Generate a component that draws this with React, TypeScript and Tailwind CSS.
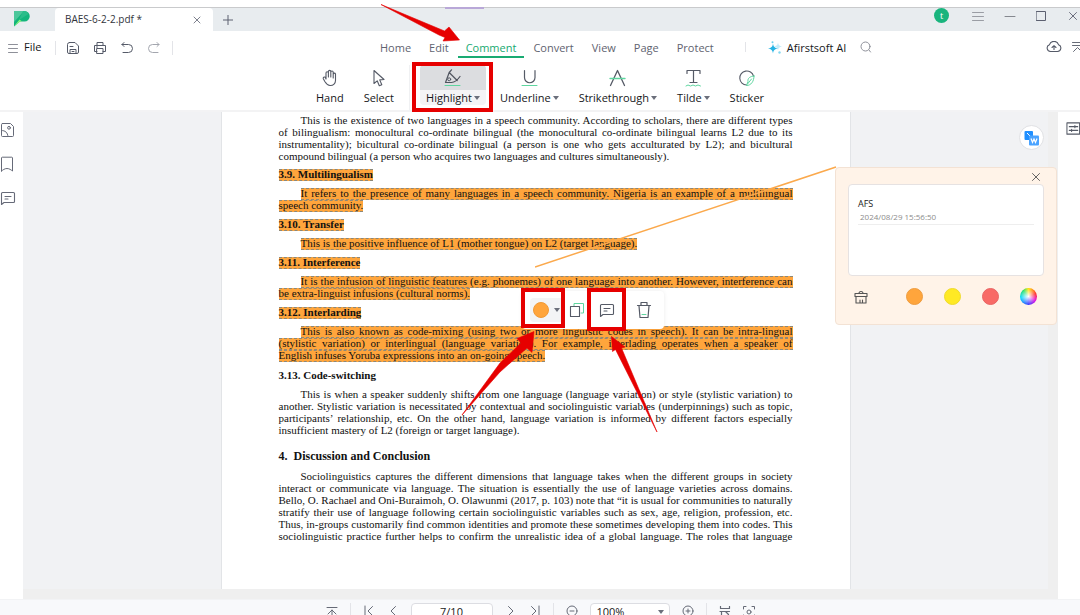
import React from "react";

type IconProps = { children: React.ReactNode; box?: string; className?: string };

function Icon({ children, box = "0 0 16 16", className = "size-4" }: IconProps) {
  return (
    <svg
      viewBox={box}
      className={`block shrink-0 ${className}`}
      fill="none"
      stroke="currentColor"
      strokeWidth="1"
      strokeLinecap="round"
      strokeLinejoin="round"
      aria-hidden="true"
    >
      {children}
    </svg>
  );
}

function Caret() {
  return (
    <svg viewBox="0 0 6 4" className="block h-1 w-1.5 shrink-0" aria-hidden="true">
      <path d="M0 0h6L3 4z" fill="#6b6f7b" />
    </svg>
  );
}

function Divider({ className = "h-3.5" }: { className?: string }) {
  return <span className={`w-px shrink-0 bg-[#e3e4e8] ${className}`} />;
}

function TitleBar() {
  return (
    <header className="mt-[7px] flex h-6 shrink-0 items-stretch border-t border-[#c9cacc] bg-[#e8ecef] text-[#5c6070]">
      <div className="flex w-[55px] shrink-0 pt-[3px] pl-3.5">
        <svg viewBox="0 0 16 16" className="size-4" aria-hidden="true">
          <path d="M0 0h10.500a5 5 0 0 1 0 10.500H6L0 15.500z" fill="#14b57c" />
          <path d="M0 0h10L0 11z" fill="#4cc79b" />
          <path d="M0 15.500 5.500 8.500 8 10.500H6z" fill="#8bf77c" />
          <path d="M9 0h2a5 5 0 0 1 3.500 3L5 9z" fill="#2bbd8a" />
        </svg>
      </div>
      <div className="flex w-[158px] shrink-0 items-center justify-between rounded-t bg-white pr-3 pl-2.5">
        <span className="text-[10px] text-[#33353c]">BAES-6-2-2.pdf *</span>
        <button aria-label="Close tab">
          <Icon box="0 0 8 8" className="size-2"><path d="M1 1l6 6M7 1 1 7" strokeWidth="0.8" /></Icon>
        </button>
      </div>
      <button aria-label="New tab" className="pl-2.5">
        <Icon box="0 0 10 10" className="size-2.5"><path d="M5 0v10M0 5h10" /></Icon>
      </button>
      <div className="ml-auto flex items-start">
        <span className="mr-[23px] flex size-[15px] items-center justify-center rounded-full bg-[#19b47d] text-[9px] leading-none text-white">t</span>
        <button aria-label="Menu" className="mr-5 text-[#9a9da4]"><Icon className="h-4 w-3" box="0 0 12 16"><path d="M.5 4.500h11M.5 8.500h11M.5 12.500h11" /></Icon></button>
        <button aria-label="Minimize" className="mr-5 text-[#85888f]"><Icon className="h-4 w-3" box="0 0 12 16"><path d="M1 8.500h10" /></Icon></button>
        <button aria-label="Maximize" className="mr-[22px]"><Icon className="h-4 w-2.5" box="0 0 10 16"><path d="M.5 3.500h9v9h-9z" /></Icon></button>
        <button aria-label="Close" className="pr-0.5"><Icon className="h-4 w-2.5" box="0 0 10 16"><path d="m1.500 4.500 7 7m0-7-7 7" strokeWidth="0.9" /></Icon></button>
      </div>
    </header>
  );
}

const tabs = ["Home", "Edit", "Comment", "Convert", "View", "Page", "Protect"];

function MenuRow() {
  return (
    <div className="flex h-[31px] shrink-0 items-center text-[#555a68]">
      <div className="flex w-[371px] shrink-0 items-center pt-0.5 pl-2">
        <button className="flex items-center gap-1.5 text-[11px] text-[#16171a]">
          <Icon box="0 0 10 12" className="h-3 w-2.5 text-[#8e9099]"><path d="M.5 2.500h9M.5 6.500h9M.5 10.500h9" /></Icon>
          File
        </button>
        <span className="ml-3.5 flex items-center gap-[11px]">
          <Divider />
          <button aria-label="Save"><Icon box="0 0 12 12" className="size-3"><path d="M2.500.5h5.500l3.500 3.500v6a1.500 1.500 0 0 1-1.500 1.500H2A1.500 1.500 0 0 1 .5 10V2.500a2 2 0 0 1 2-2zM3 11.500V7.500h6v4M3 4.500h3M5 9.500h2" /></Icon></button>
        </span>
        <button aria-label="Print" className="ml-[15px]"><Icon box="0 0 12 12" className="size-3"><path d="M3 3.500v-3h6v3M3 9.500H.5v-6h11v6H9M3 6.500h6v5H3zM2.500 5h1" /></Icon></button>
        <button aria-label="Undo" className="ml-[15px]"><Icon box="0 0 12 12" className="size-3"><path d="M3 .5 1 2.500l2 2M1 2.500h6.500a4 4 0 0 1 0 8H2" /></Icon></button>
        <button aria-label="Redo" className="ml-[15px] text-[#a3a6ae]"><Icon box="0 0 12 12" className="size-3"><path d="m9 .5 2 2-2 2M11 2.500H4.500a4 4 0 0 0 0 8H10" /></Icon></button>
        <span className="ml-3"><Divider className="block h-3.5" /></span>
      </div>
      <nav className="flex h-full text-[11px]">
        {tabs.map((t) => (
          <a
            key={t}
            href={`#${t.toLowerCase()}`}
            className={
              t === "Comment"
                ? "mb-1 flex items-center border-b-2 border-[#19ab72] px-2 pt-[9px] text-[#17a971]"
                : "flex items-center px-[9px] pt-[3px] text-[#5f6370]"
            }
          >
            {t}
          </a>
        ))}
      </nav>
      <span className="mr-[22px] ml-[22px]"><Divider className="block h-2.5" /></span>
      <a href="#ai" className="flex shrink-0 items-center gap-[5px] pt-[3px] text-[11px] text-[#16171a]">
        <svg viewBox="0 0 14 14" className="size-3.5" aria-hidden="true">
          <path d="M10 1.500c.4 2.600 1.400 3.600 4 4-2.600.4-3.600 1.400-4 4-.4-2.600-1.400-3.600-4-4 2.600-.4 3.600-1.400 4-4z" fill="#c5ecfa" />
          <path d="M5 2.500c.6 3.400 1.600 4.400 5 5-3.400.6-4.400 1.600-5 5-.6-3.400-1.600-4.400-5-5 3.400-.6 4.400-1.600 5-5z" fill="#25b3e4" />
          <circle cx="4.500" cy="1.200" r="1" fill="#6cd0ef" />
          <circle cx="11.500" cy="11.500" r="1.200" fill="#84d8f1" />
        </svg>
        Afirstsoft AI
      </a>
      <button aria-label="Search" className="ml-3.5 text-[#8f929b]"><Icon box="0 0 12 12" className="size-3"><circle cx="5.500" cy="5.500" r="4.500" /><path d="m9 9 1.500 2" /></Icon></button>
      <div className="ml-auto flex items-center gap-2.5">
        <button aria-label="Cloud upload"><Icon box="0 0 16 12" className="h-3 w-4"><path d="M4.500 10.500a3.500 3.500 0 0 1-1-6.800 4.700 4.700 0 0 1 9 0 3.500 3.500 0 0 1-1 6.800zM8 8.500V5M6 6.500 8 4.700l2 1.800" strokeWidth="1.100" /></Icon></button>
        <button aria-label="Collapse ribbon" className="w-2 overflow-hidden"><Icon box="0 0 11 12" className="h-3 w-[11px]"><path d="M.5 1.500h10M.5 4.500h10M1.500 10.500l4-4 4 4" strokeWidth="0.900" /></Icon></button>
      </div>
    </div>
  );
}

const green = "#5fd6a0";
const tools = [
  { name: "Hand", caret: false, icon: <path d="M5 10V4a1.200 1.200 0 0 1 2.400 0v4V2.600a1.200 1.200 0 0 1 2.400 0V8 3.200a1.200 1.200 0 0 1 2.400 0V9 5a1.200 1.200 0 0 1 2.300 0v6.500a5 5 0 0 1-5 5H9c-2.400 0-3.600-1.600-5-3.800L2.300 9.800a1.300 1.300 0 0 1 2-1.500z" strokeWidth="1.100" /> },
  { name: "Select", caret: false, icon: <path d="M4 1.500v13l3.200-2.700 2.100 5 2.500-1-2.100-4.900 4.300-.4z" strokeWidth="1.100" /> },
  { name: "Highlight", caret: true, icon: <><path d="M7.500.8 5.200 3.500 1.500 13.500h6c3.500-.3 6-2.500 8.500-6M5.200 3.500l8 8" strokeWidth="1.200" /><circle cx="5.200" cy="10.300" r="1.500" /><path d="M1 16.500h15" stroke={green} /></> },
  { name: "Underline", caret: true, icon: <><path d="M3.500 1.500v7a5 5 0 0 0 10.500 0v-7" strokeWidth="1.200" /><path d="M1 16.500h15" stroke={green} /></> },
  { name: "Strikethrough", caret: true, icon: <><path d="m1.500 16.500 7-15 7 15" strokeWidth="1.300" /><path d="M1 9.500h15" stroke={green} strokeWidth="1.400" /></> },
  { name: "Tilde", caret: true, icon: <><path d="M2 4.500v-3h13v3M8.500 1.500v12M5 13.500h7" strokeWidth="1.200" /><path d="M1 17l2-1 2.500 1 2.500-1 2.500 1 2.500-1 2.500 1" stroke={green} /></> },
  { name: "Sticker", caret: false, icon: <><path d="M15.500 7a7 7 0 1 0-7 9" strokeWidth="1.100" /><path d="M16 7c-4 .5-6.500 2-6 5.500L8.500 16.500c4.500 0 7.500-4 7.500-9.500zM9.500 15l4-5" stroke={green} /></> },
];

function ToolRow() {
  return (
    <div className="flex h-12 shrink-0 items-stretch justify-center pt-[3px] text-[11px] text-[#16171a]">
      {tools.map((t) => {
        const on = t.name === "Highlight";
        return (
          <React.Fragment key={t.name}>
            {on && <span className="ml-[5px] w-px bg-[#f0f1f3]" />}
            <button className={on ? "mr-1 ml-2.5 flex w-[66px] flex-col items-center" : "flex flex-col items-center px-2.5"}>
              <span className={on ? "flex h-[25px] w-full items-center justify-center rounded-t bg-[#dcdde0] text-[#50545f]" : "flex h-[25px] items-center text-[#555a66]"}>
                <Icon box="0 0 17 18" className="h-[18px] w-[17px]">{t.icon}</Icon>
              </span>
              <span className={on ? "flex w-full items-center justify-center gap-0.5 rounded-b bg-[#f4f4f6] leading-[15px]" : "flex items-center gap-0.5 leading-[15px]"}>
                {t.name}
                {t.caret && <Caret />}
              </span>
            </button>
          </React.Fragment>
        );
      })}
    </div>
  );
}

function Line({ text, indent, end, mark }: { text: string; indent: boolean; end: boolean; mark: boolean }) {
  return (
    <span className={`flex h-3 whitespace-nowrap ${indent ? "pl-[22px]" : ""}`}>
      <span
        className={`block h-3 ${end ? "" : "grow [text-align-last:justify]"} ${
          mark ? "border-y border-dashed border-[#8d8878] bg-[#ffa53c] leading-[9px]" : "leading-[12px]"
        }`}
      >
        {text}
      </span>
    </span>
  );
}

function Para({ lines, mark = false, continues = false }: { lines: string[]; mark?: boolean; continues?: boolean }) {
  return (
    <p>
      {lines.map((l, i) => (
        <Line key={l} text={l} indent={i === 0} end={!continues && i === lines.length - 1} mark={mark} />
      ))}
    </p>
  );
}

function Heading({ text, mark = true }: { text: string; mark?: boolean }) {
  return (
    <h2 className="font-bold">
      <Line text={text} indent={false} end mark={mark} />
    </h2>
  );
}

function Page() {
  return (
    <article className="mx-auto h-full w-[630px] max-w-full overflow-hidden border-x border-[#e2e4e7] bg-white px-[57px] pt-0.5 font-['Liberation_Serif',serif] text-[11px] text-[#111]">
      <div className="mb-[7px]">
        <Para
          lines={[
            "This is the existence of two languages in a speech community. According to scholars, there are different types",
            "of bilingualism: monocultural co-ordinate bilingual (the monocultural co-ordinate bilingual learns L2 due to its",
            "instrumentality); bicultural co-ordinate bilingual (a person is one who gets acculturated by L2); and bicultural",
            "compound bilingual (a person who acquires two languages and cultures simultaneously).",
          ]}
        />
      </div>
      <div className="flex flex-col gap-[7px]">
        <Heading text="3.9. Multilingualism" />
        <Para mark lines={["It refers to the presence of many languages in a speech community. Nigeria is an example of a multilingual", "speech community."]} />
        <Heading text="3.10. Transfer" />
        <Para mark lines={["This is the positive influence of L1 (mother tongue) on L2 (target language)."]} />
        <Heading text="3.11. Interference" />
        <Para mark lines={["It is the infusion of linguistic features (e.g. phonemes) of one language into another. However, interference can", "be extra-linguist infusions (cultural norms)."]} />
        <Heading text="3.12. Interlarding" />
        <Para
          mark
          lines={[
            "This is also known as code-mixing (using two or more linguistic codes in speech). It can be intra-lingual",
            "(stylistic variation) or interlingual (language variation). For example, interlading operates when a speaker of",
            "English infuses Yoruba expressions into an on-going speech.",
          ]}
        />
        <Heading text="3.13. Code-switching" mark={false} />
        <Para
          lines={[
            "This is when a speaker suddenly shifts from one language (language variation) or style (stylistic variation) to",
            "another. Stylistic variation is necessitated by contextual and sociolinguistic variables (underpinnings) such as topic,",
            "participants’ relationship, etc. On the other hand, language variation is informed by different factors especially",
            "insufficient mastery of L2 (foreign or target language).",
          ]}
        />
      </div>
      <div className="mt-3.5 flex flex-col gap-2">
        <h1 className="text-[12px] leading-[12px] font-bold whitespace-pre">4.  Discussion and Conclusion</h1>
        <Para
          continues
          lines={[
            "Sociolinguistics captures the different dimensions that language takes when the different groups in society",
            "interact or communicate via language. The situation is essentially the use of language varieties across domains.",
            "Bello, O. Rachael and Oni-Buraimoh, O. Olawunmi (2017, p. 103) note that “it is usual for communities to naturally",
            "stratify their use of language following certain sociolinguistic variables such as sex, age, religion, profession, etc.",
            "Thus, in-groups customarily find common identities and promote these sometimes developing them into codes. This",
            "sociolinguistic practice further helps to confirm the unrealistic idea of a global language. The roles that language",
          ]}
        />
      </div>
    </article>
  );
}

function NoteIcon({ className = "size-4" }: { className?: string }) {
  return (
    <Icon className={className}>
      <path d="M2.500 2.500h11a1 1 0 0 1 1 1v8a1 1 0 0 1-1 1H4l-2.500 2v-11a1 1 0 0 1 1-1zM5 6.500h6M5 9h3" strokeWidth="1.100" />
    </Icon>
  );
}

function Sidebar() {
  return (
    <aside className="flex w-[23px] shrink-0 flex-col gap-[18px] bg-white pt-2.5 text-[#666a78]">
      <button aria-label="Thumbnails"><Icon><path d="M2.500 1.500h8l3 3v9a1 1 0 0 1-1 1h-10a1 1 0 0 1-1-1v-11a1 1 0 0 1 1-1zM1.500 8.500c4 0 6 2 6.500 6" /><circle cx="9" cy="5.800" r="1.400" /></Icon></button>
      <button aria-label="Bookmarks"><Icon><path d="M1.500 15V2a.8.8 0 0 1 .8-.8h9.400a.8.8 0 0 1 .8.8v13c-1.500-1-3-2.500-5.500-2.500S3 14 1.500 15z" /></Icon></button>
      <button aria-label="Comments"><NoteIcon /></button>
    </aside>
  );
}

function FloatingBar() {
  return (
    <div className="absolute top-[291px] left-[522px] flex h-[38px] w-[142px] items-center rounded bg-white pl-2 text-[#555a66] shadow-[0_0_4px_rgba(0,0,0,0.08)]">
      <button aria-label="Colour" className="flex h-6 w-[34px] items-center justify-between rounded bg-[#f3f4f6] pr-1 pl-[3px]">
        <span className="size-4 rounded-full border border-[#f19a36] bg-[#ffa53c]" />
        <Caret />
      </button>
      <button aria-label="Copy" className="ml-[5px]">
        <Icon><path d="M5 4V1.500h9.500V11H12" stroke={green} /><path d="M1.500 4.500h9v10h-9z" strokeWidth="1.100" /></Icon>
      </button>
      <button aria-label="Add note" className="ml-3.5"><NoteIcon /></button>
      <button aria-label="Delete" className="ml-[21px]">
        <Icon box="0 0 16 18" className="h-[18px] w-4"><path d="M1.500 4.500h13M5 4.500V1.500h6v3M3 5l1 11.500h8L13 5" strokeWidth="1.200" /><path d="M6 13.500h4" stroke={green} /></Icon>
      </button>
    </div>
  );
}

function NotePopup() {
  return (
    <section aria-label="Note" className="absolute top-[167px] left-[835px] flex h-[158px] w-[222px] flex-col rounded-sm border border-[#f3e2d4] bg-[#fff3e8] px-3 text-[#555]">
      <button aria-label="Close note" className="mt-1 mr-[3px] self-end"><Icon box="0 0 10 10" className="size-2.5"><path d="m1.500 1.500 7 7m0-7-7 7" strokeWidth="0.900" /></Icon></button>
      <div className="mt-0.5 flex h-[92px] flex-col rounded border border-[#e6e2e2] bg-white px-[9px] pt-3">
        <div className="text-[9px] leading-[13px] text-[#222]">AFS</div>
        <div className="border-b border-[#eee] pb-[1px] pl-0.5 text-[8px] leading-[13px] text-[#8c8c8c]">2024/08/29 15:56:50</div>
        <textarea aria-label="Note text" className="min-h-0 grow resize-none outline-none" />
      </div>
      <div className="mt-3 flex items-center pl-1.5">
        <button aria-label="Clear" className="mr-[38px]"><Icon box="0 0 14 14" className="size-3.5"><path d="M5 3.500a2 2 0 0 1 4 0M1 6.500v-3h12v3zM2 6.500v6.500h10V6.500M6 13v-3M8.500 13v-3" strokeWidth="1.100" /></Icon></button>
        <div className="flex gap-[21px]">
          <button aria-label="Orange" className="size-[17px] rounded-full border border-[#ee9c3f] bg-[#ffa53c]" />
          <button aria-label="Yellow" className="size-[17px] rounded-full border border-[#eedb2d] bg-[#ffe924]" />
          <button aria-label="Red" className="size-[17px] rounded-full border border-[#e96565] bg-[#f86a66]" />
          <button aria-label="More colours" className="size-[17px] rounded-full bg-[radial-gradient(circle,white,transparent_70%),conic-gradient(#ffe000,#ff2020_70deg,#e000e0_120deg,#3030ff_180deg,#00d8ff_260deg,#20e060_320deg,#ffe000)]" />
        </div>
      </div>
    </section>
  );
}

function Arrows() {
  return (
    <svg viewBox="0 0 1080 615" className="pointer-events-none absolute top-0 left-0 h-[615px] w-[1080px]" aria-hidden="true">
      <g fill="#e60000" stroke="#e60000" strokeWidth="0.600" strokeLinejoin="round">
        <path d="M381 4.500 444.500 31 449 27 459.500 40 443 41 445 37.500 439 35z" />
        <path d="M462 415 500 363 521 343 517 338.500 534 331.500 532 352.500 527 348 500 372z" />
        <path d="M657 432 615.500 349.500 612.500 351.500 611.500 336.500 625 347 621.500 348z" />
      </g>
    </svg>
  );
}

function Footer() {
  return (
    <footer className="flex h-4 shrink-0 items-start justify-center gap-3 overflow-hidden border-t border-[#f2f3f5] bg-[#f8f9fb] pt-[3px] text-[#666a76]">
      <button aria-label="Scroll to top" className="mt-[3px]"><Icon box="0 0 12 12" className="size-3"><path d="M1 1.500h10M6 12V4M2 8l4-4 4 4" /></Icon></button>
      <Divider className="h-6" />
      <button aria-label="First page" className="mt-0.5"><Icon box="0 0 12 12" className="size-3"><path d="M2 1v10M9.500 1.500 5 6l4.500 4.500" /></Icon></button>
      <button aria-label="Previous page" className="mt-0.5"><Icon box="0 0 12 12" className="size-3"><path d="M8.500 1.500 4 6l4.500 4.500" /></Icon></button>
      <input aria-label="Page" defaultValue="7/10" className="h-[17px] w-[82px] shrink-0 rounded-sm border border-[#dcdde2] bg-white text-center text-[11px] text-[#222]" />
      <button aria-label="Next page" className="mt-0.5"><Icon box="0 0 12 12" className="size-3"><path d="M3.500 1.500 8 6l-4.500 4.500" /></Icon></button>
      <button aria-label="Last page" className="mt-0.5"><Icon box="0 0 12 12" className="size-3"><path d="M10 1v10M2.500 1.500 7 6l-4.500 4.500" /></Icon></button>
      <Divider className="h-6" />
      <button aria-label="Zoom out" className="mt-0.5"><Icon box="0 0 12 12" className="size-3"><circle cx="6" cy="6" r="5" /><path d="M4 6h4" /></Icon></button>
      <div className="grid shrink-0 items-center">
        <select aria-label="Zoom" className="col-start-1 row-start-1 h-[17px] w-20 appearance-none rounded-sm border border-[#dcdde2] bg-white pl-1.5 text-[11px] leading-[15px] text-[#222]">
          <option>100%</option>
        </select>
        <span className="pointer-events-none col-start-1 row-start-1 mr-1.5 justify-self-end"><Caret /></span>
      </div>
      <button aria-label="Zoom in" className="mt-0.5"><Icon box="0 0 12 12" className="size-3"><circle cx="6" cy="6" r="5" /><path d="M4 6h4M6 4v4" /></Icon></button>
      <Divider className="h-6" />
      <button aria-label="Fit width" className="mt-[3px]"><Icon box="0 0 12 12" className="size-3"><path d="M1.500.5v2h9v-2M2.500 11V5.500h4l3 3V12M1 5.500h2M10.500 5.500H7" strokeWidth="1.200" /></Icon></button>
      <button aria-label="Fit page" className="mt-[3px]"><Icon box="0 0 12 12" className="size-3"><path d="M.5 3V.5H3M9 .5h2.500V3M.5 9v2.500H3M9 11.500h2.500V9" /><circle cx="6" cy="6" r="2" /></Icon></button>
    </footer>
  );
}

export default function App() {
  return (
    <div className="relative flex h-screen flex-col overflow-hidden bg-white font-['Open_Sans','Noto_Sans',sans-serif]">
      <TitleBar />
      <MenuRow />
      <ToolRow />
      <div className="h-0.5 shrink-0 bg-[#f3f3f4]" />
      <main className="flex min-h-0 grow">
        <Sidebar />
        <div className="flex min-w-0 grow flex-col bg-[#efefef]">
          <div className="flex min-h-0 grow">
            <div className="min-w-0 grow bg-[#f1f2f4]"><Page /></div>
            <div className="w-2.5 shrink-0 bg-[#efefef]" />
          </div>
          <div className="h-2.5 shrink-0" />
        </div>
        <aside className="w-[22px] shrink-0 overflow-hidden bg-white pt-[9px] pl-2 text-[#555a66]">
          <button aria-label="Properties" className="block"><Icon className="size-[15px]"><path d="M1 2h13.500v12H1zM3.500 6h9M3.500 10h9M9.500 4.800v2.400M6 8.800v2.400" strokeWidth="1.100" /></Icon></button>
        </aside>
      </main>
      <Footer />

      <span className="absolute top-[7px] left-[445px] h-0.5 w-[39px] bg-[#b9a8d8]" />
      <button aria-label="Convert to Word" className="absolute top-[125px] left-[1019px] flex size-[25px] items-center justify-center rounded-full border border-[#e0e1e4] bg-white">
        <svg viewBox="0 0 16 16" className="size-4" aria-hidden="true">
          <rect x="0.500" y="1" width="8.500" height="9" rx="1" fill="#1f8fff" />
          <path d="m3 3 3 3" stroke="#fff" />
          <rect x="5" y="5.500" width="10" height="10" rx="1" fill="#4aa3ff" />
          <path d="m7 8.500 1.500 4 1.500-3.500 1.500 3.500 1.500-4" fill="none" stroke="#fff" strokeWidth="1.200" />
        </svg>
      </button>
      <svg viewBox="0 0 302 102" className="pointer-events-none absolute top-[166px] left-[535px] h-[102px] w-[302px]" aria-hidden="true">
        <path d="M0 101 301 1" stroke="#fba94c" strokeWidth="1.500" />
      </svg>
      <FloatingBar />
      <NotePopup />
      <span className="pointer-events-none absolute top-[62px] left-[412px] h-[50px] w-[81px] border-4 border-[#e60000]" />
      <span className="pointer-events-none absolute top-[288px] left-[521px] h-10 w-11 border-4 border-[#e60000]" />
      <span className="pointer-events-none absolute top-[288px] left-[587px] h-[43px] w-[39px] border-4 border-[#e60000]" />
      <Arrows />
    </div>
  );
}
